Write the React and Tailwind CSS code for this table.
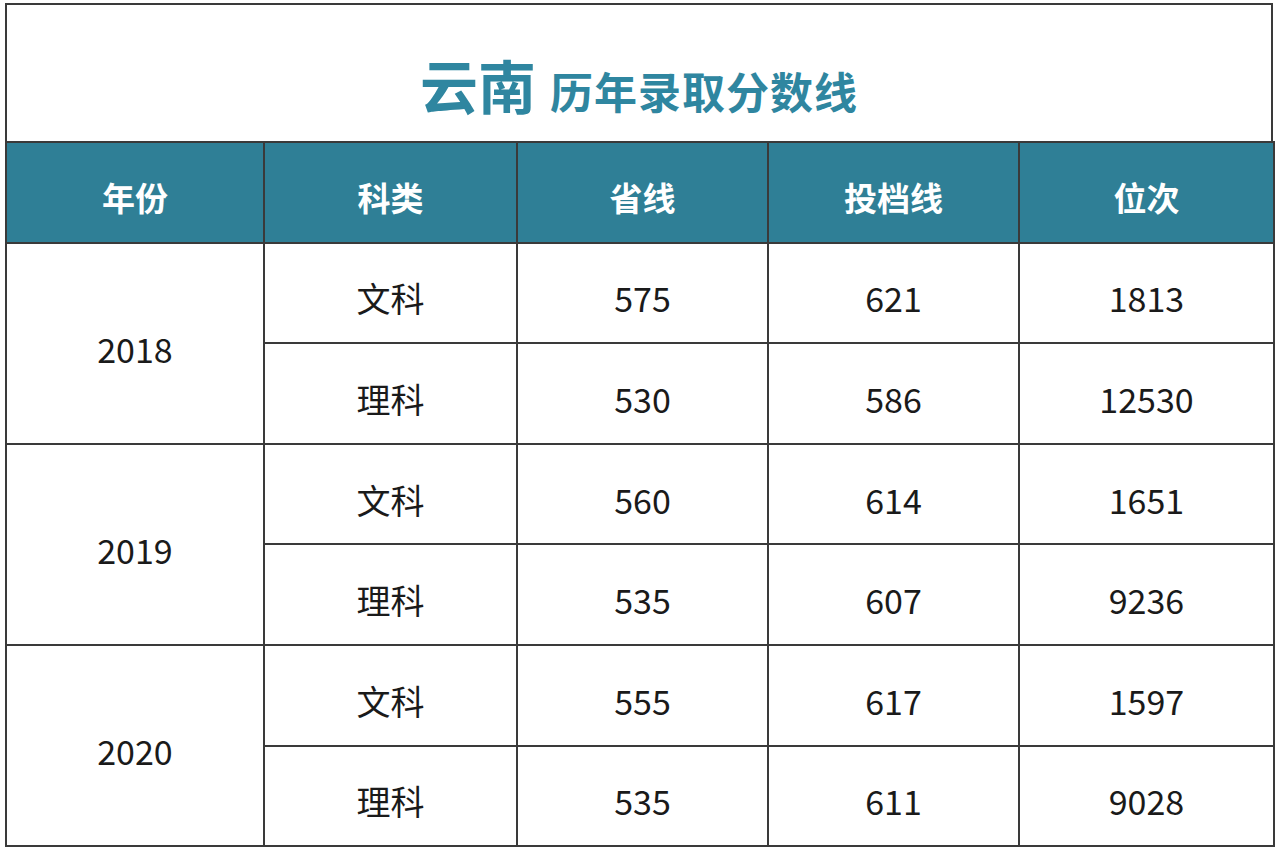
const rows = [
  { year: "2018", items: [["文科", "575", "621", "1813"], ["理科", "530", "586", "12530"]] },
  { year: "2019", items: [["文科", "560", "614", "1651"], ["理科", "535", "607", "9236"]] },
  { year: "2020", items: [["文科", "555", "617", "1597"], ["理科", "535", "611", "9028"]] },
];

const headers = ["年份", "科类", "省线", "投档线", "位次"];

const cell = "border-2 border-[#3a3a3a] text-center align-middle pt-[10px] pb-0";

export default function App() {
  return (
    <div className="w-[1280px] h-[854px] bg-white pt-[3px] pl-[5px] font-['Noto_Sans_CJK_SC','Noto_Sans',sans-serif]">
      <div className="w-[1268px] border-2 border-b-0 border-[#3a3a3a] h-[138px] flex items-center justify-center pt-[22px]">
        <h1 className="flex items-baseline gap-[14px] font-bold text-[#2f86a0] leading-none">
          <span className="text-[58px]">云南</span>
          <span className="text-[43px] tracking-[1px]">历年录取分数线</span>
        </h1>
      </div>
      <table className="w-[1268px] border-collapse table-fixed">
        <colgroup>
          <col className="w-[258px]" />
          <col className="w-[253px]" />
          <col className="w-[251px]" />
          <col className="w-[251px]" />
          <col className="w-[255px]" />
        </colgroup>
        <thead>
          <tr className="h-[100.6px] bg-[#2f7f96]">
            {headers.map((h) => (
              <th key={h} className={cell + " text-white text-[33px] font-bold"}>
                {h}
              </th>
            ))}
          </tr>
        </thead>
        <tbody className="text-[34px] text-[#1a1a1a]">
          {rows.map((g) =>
            g.items.map((r, i) => (
              <tr key={g.year + i} className="h-[100.6px]">
                {i === 0 && (
                  <td rowSpan={2} className={cell}>
                    {g.year}
                  </td>
                )}
                {r.map((v, j) => (
                  <td key={j} className={cell}>
                    {v}
                  </td>
                ))}
              </tr>
            ))
          )}
        </tbody>
      </table>
    </div>
  );
}
